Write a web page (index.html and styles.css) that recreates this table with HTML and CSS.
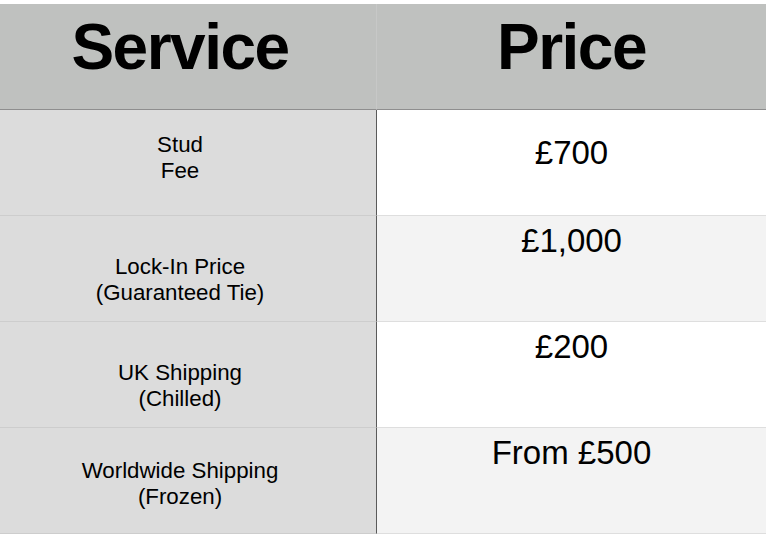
FILE: index.html
```html
<!DOCTYPE html>
<html lang="en">
<head>
<meta charset="utf-8">
<title>Service Price</title>
<link rel="stylesheet" href="styles.css">
</head>
<body>
<div class="page">
  <div class="table">
    <div class="head head-left">Service</div>
    <div class="head head-right">Price</div>

    <div class="svc r1">Stud<br>Fee</div>
    <div class="price odd p1">£700</div>

    <div class="svc r2">Lock-In Price<br>(Guaranteed Tie)</div>
    <div class="price even p2">£1,000</div>

    <div class="svc r3">UK Shipping<br>(Chilled)</div>
    <div class="price odd p2">£200</div>

    <div class="svc r4">Worldwide Shipping<br>(Frozen)</div>
    <div class="price even p2">From £500</div>
  </div>
</div>
</body>
</html>
```

FILE: styles.css
```css
html, body {
  margin: 0;
  padding: 0;
  background: #ffffff;
}

.page {
  padding-top: 4px;
  font-family: "Liberation Sans", Arial, Helvetica, sans-serif;
  color: #000;
}

.table {
  width: 766px;
  display: grid;
  grid-template-columns: 377px 389px;
  grid-template-rows: 106px 106px 106px 106px 106px;
}

.head {
  background: #bfc1bf;
  border-bottom: 1px solid #8e8e8e;
  font-weight: bold;
  font-size: 64px;
  letter-spacing: -1.5px;
  line-height: 74px;
  padding-top: 6px;
  box-sizing: border-box;
  text-align: center;
}

.head-left {
  border-right: 1px solid #c7c8c7;
  padding-right: 16px;
}

.svc {
  background: #dcdcdc;
  border-right: 1px solid #5a5a5a;
  border-bottom: 1px solid #cdcdcd;
  box-sizing: border-box;
  font-size: 22.3px;
  line-height: 26px;
  text-align: center;
  padding-right: 16px;
}

.r1 { padding-top: 22px; }
.r2 { padding-top: 38px; }
.r3 { padding-top: 38px; }
.r4 { padding-top: 30px; }

.price {
  border-bottom: 1px solid #dedede;
  box-sizing: border-box;
  font-size: 33px;
  line-height: 38px;
  text-align: center;
}

.odd { background: #ffffff; }
.even { background: #f3f3f3; }

.p1 { padding-top: 24px; }
.p2 { padding-top: 6px; }
```
